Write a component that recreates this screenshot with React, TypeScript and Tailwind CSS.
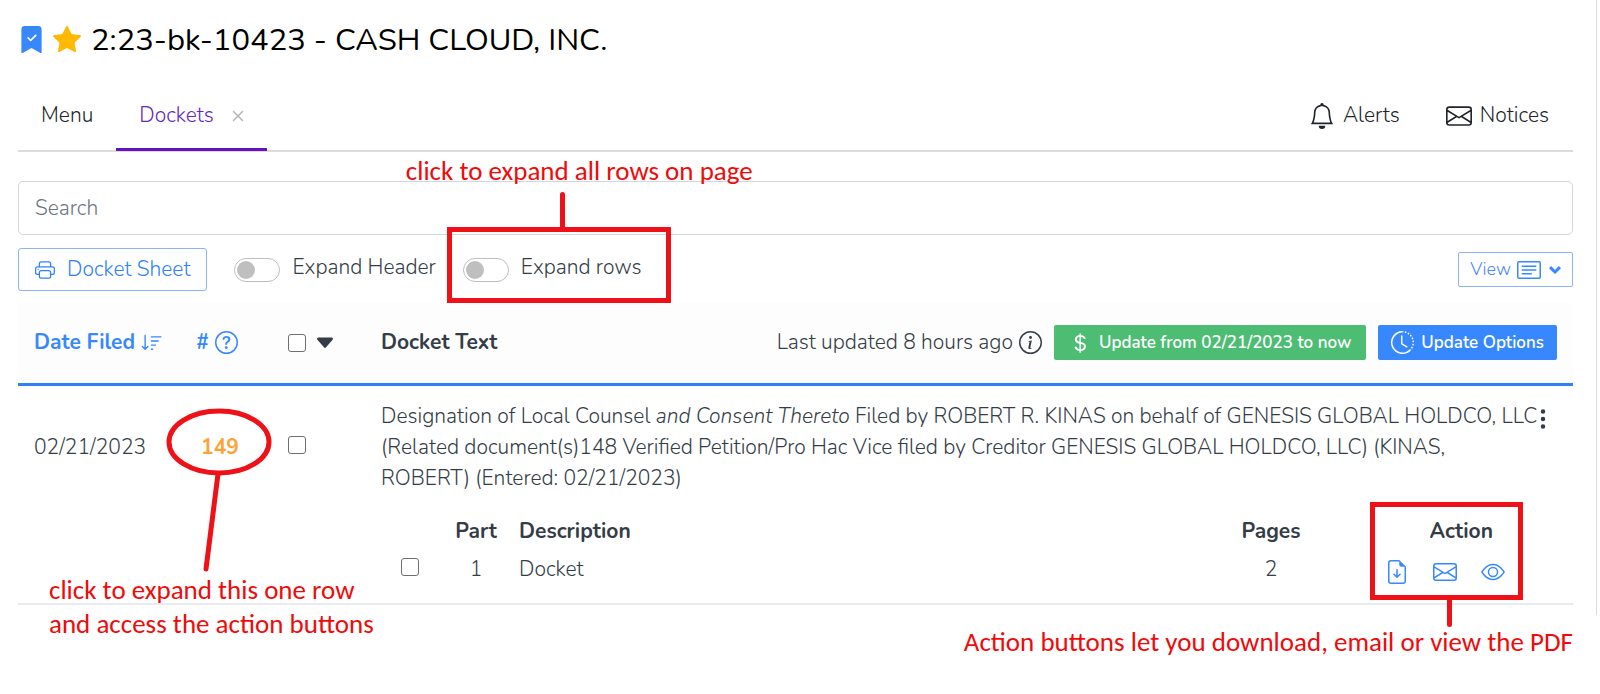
import { useState } from 'react';
import {
  BsBell,
  BsBookmarkCheckFill,
  BsCardText,
  BsCaretDownFill,
  BsClockHistory,
  BsCurrencyDollar,
  BsEnvelope,
  BsEye,
  BsFileEarmarkArrowDown,
  BsInfoCircle,
  BsPrinter,
  BsQuestionCircle,
  BsSortDown,
  BsStarFill,
  BsThreeDotsVertical,
  BsX,
} from 'react-icons/bs';

interface ToggleProps {
  id: string;
  label: string;
}

function Toggle({ id, label }: ToggleProps) {
  const [on, setOn] = useState(false);

  return (
    <div className="flex items-center gap-3">
      <input
        id={id}
        type="checkbox"
        role="switch"
        checked={on}
        onChange={() => setOn(!on)}
        className="h-6 w-[46px] appearance-none rounded-full border border-[#bfbfbf] bg-white p-0.5 before:block before:size-[18px] before:rounded-full before:bg-[#bfbfbf] checked:before:ml-auto checked:before:bg-[#3788ff]"
      />
      <label htmlFor={id} className="pb-1.5 leading-6">{label}</label>
    </div>
  );
}

function Checkbox({ label }: { label: string }) {
  return (
    <input
      type="checkbox"
      aria-label={label}
      className="block size-[18px] shrink-0 appearance-none rounded-[3px] border border-[#6f6f6f] bg-white checked:bg-[#3788ff]"
    />
  );
}

function CaseHeader() {
  return (
    <header className="flex h-10 items-center">
      <BsBookmarkCheckFill className="size-[27px] text-[#3788ff]" />
      <BsStarFill className="ml-2 size-7 text-[#ffb900]" />
      <h1 className="ml-2.5 pt-0.5 text-[31px] leading-10 font-normal text-black">2:23-bk-10423 - CASH CLOUD, INC.</h1>
    </header>
  );
}

function Tabs() {
  return (
    <nav className="mt-[19px] flex h-[74px] items-start border-b-2 border-[#dcdcdc]">
      <a href="#menu" className="flex h-[73px] items-center px-[23px] pt-0.5 text-[#212529]">Menu</a>
      <div className="flex h-[73px] items-center border-b-3 border-[#6610c0] pt-[5px] pr-[17px] pl-[23px] text-[#6528b8]">
        <a href="#dockets">Dockets</a>
        <button type="button" aria-label="Close tab" className="ml-3 text-[#b5b5b5]">
          <BsX className="size-6" />
        </button>
      </div>
      <div className="ml-auto flex h-[73px] items-center gap-[46px] pt-0.5 pr-6 text-[#212529]">
        <a href="#alerts" className="flex items-center gap-2">
          <BsBell className="size-[26px]" />
          Alerts
        </a>
        <a href="#notices" className="flex items-center gap-2">
          <BsEnvelope className="size-[26px]" />
          Notices
        </a>
      </div>
    </nav>
  );
}

function Toolbar() {
  return (
    <div className="mt-[13px] flex items-center gap-[27px]">
      <button type="button" className="flex h-[43px] items-center gap-3 rounded-[3px] border border-[#8ab4ff] px-4 text-[#3080ff]">
        <BsPrinter className="size-5" />
        Docket Sheet
      </button>
      <Toggle id="expand-header" label="Expand Header" />
      <div className="relative">
        <Toggle id="expand-rows" label="Expand rows" />
        {/* Callout for the row toggle */}
        <div className="pointer-events-none absolute -top-7 -left-4 h-[76px] w-56 border-5 border-[#ee1118]">
          <div className="absolute bottom-full left-[108px] h-10 w-[5px] rounded-full bg-[#ee1118]" />
          <p className="absolute bottom-[110px] -left-[46px] font-[Carlito,Lato,sans-serif] text-[27px] leading-[34px] font-normal whitespace-nowrap text-[#f00a0a]">
            click to expand all rows on page
          </p>
        </div>
      </div>
      <button type="button" className="ml-auto flex h-[35px] items-center rounded-xs border border-[#8ab4ff] px-[11px] text-[18px] text-[#4a86ff]">
        View
        <BsCardText className="ml-1.5 size-6 text-[#3788ff]" />
        <svg viewBox="0 0 12 8" className="ml-2 h-2 w-3 text-[#3788ff]" fill="none" stroke="currentColor" strokeWidth="3">
          <path d="M1 1.200 6 6l5-4.800" />
        </svg>
      </button>
    </div>
  );
}

function DocumentParts() {
  return (
    <div className="relative mt-[19px] mr-6">
      <table className="w-full table-fixed">
        <thead>
          <tr className="h-[38px] font-bold">
            <th className="w-[58px]" aria-label="Select" />
            <th className="w-[74px]">Part</th>
            <th className="pl-1.5 text-left">Description</th>
            <th className="w-[150px]">Pages</th>
            <th className="w-[175px] pr-7 text-right">Action</th>
          </tr>
        </thead>
        <tbody>
          <tr className="h-[38px]">
            <td className="pb-1.5 pl-5"><Checkbox label="Select part 1" /></td>
            <td className="text-center">1</td>
            <td className="pl-1.5">Docket</td>
            <td className="text-center">2</td>
            <td className="pr-4">
              <div className="flex justify-end gap-6 pt-1 text-[#3788ff]">
                <button type="button" aria-label="Download"><BsFileEarmarkArrowDown className="size-6" /></button>
                <button type="button" aria-label="Email"><BsEnvelope className="size-6" /></button>
                <button type="button" aria-label="View"><BsEye className="size-6" /></button>
              </div>
            </td>
          </tr>
        </tbody>
      </table>

      {/* Callout for the action buttons */}
      <div className="pointer-events-none absolute -top-[11px] -right-0.5 h-[98px] w-[153px] border-5 border-[#ee1118]">
        <div className="absolute top-full left-[72px] h-8 w-[5px] rounded-full bg-[#ee1118]" />
        <p className="absolute top-[118px] -right-[55px] font-[Carlito,Lato,sans-serif] text-[27px] leading-[34px] font-normal whitespace-nowrap text-[#f00a0a]">
          Action buttons let you download, email or view the PDF
        </p>
      </div>
    </div>
  );
}

function DocketTable() {
  return (
    <table className="mt-3 w-full table-fixed">
      <thead>
        <tr className="h-[81px] border-b-3 border-[#3080f8] bg-[#fdfdfd] text-left font-bold">
          <th className="w-[164px] pl-4 text-[#3788ff]">
            <button type="button" className="flex items-center gap-1.5 whitespace-nowrap">
              Date Filed
              <BsSortDown className="size-[22px]" />
            </button>
          </th>
          <th className="w-[76px] pr-1.5 text-[#3788ff]">
            <div className="flex items-center justify-center gap-1.5">
              #
              <BsQuestionCircle className="size-[23px]" />
            </div>
          </th>
          <th className="w-[107px] pl-[30px]">
            <div className="flex items-center gap-2">
              <Checkbox label="Select all dockets" />
              <BsCaretDownFill className="size-[22px]" />
            </div>
          </th>
          <th className="pr-4 pl-4">
            <div className="flex items-center">
              Docket Text
              <span className="ml-auto font-light">Last updated 8 hours ago</span>
              <BsInfoCircle className="ml-1.5 size-[23px]" />
              <button type="button" className="ml-3 flex h-[35px] items-center gap-2 rounded-xs bg-[#4dbd74] px-[15px] text-[17px] font-semibold text-white">
                <BsCurrencyDollar className="size-[22px]" />
                Update from 02/21/2023 to now
              </button>
              <button type="button" className="ml-3 flex h-[35px] items-center gap-[7px] rounded-xs bg-[#3788ff] px-[13px] text-[17px] font-semibold text-white">
                <BsClockHistory className="size-[23px]" />
                Update Options
              </button>
            </div>
          </th>
        </tr>
      </thead>
      <tbody>
        <tr className="border-b-2 border-[#e9ecef] align-top">
          <td className="relative pt-[46px] pl-4">
            02/21/2023
            <p className="pointer-events-none absolute top-[187px] left-[31px] z-10 font-[Carlito,Lato,sans-serif] text-[27px] leading-[34px] font-normal whitespace-nowrap text-[#f00a0a]">
              click to expand this one row
              <br />
              and access the action buttons
            </p>
          </td>
          <td className="relative pt-[46px] text-center font-bold text-[#ffa235]">
            <button type="button">149</button>
            {/* Callout for the docket number */}
            <svg
              viewBox="0 0 106 166"
              className="pointer-events-none absolute top-[22px] -left-4 h-[166px] w-[106px] max-w-none"
              fill="none"
              stroke="#ee1118"
              strokeWidth="5"
              strokeLinecap="round"
            >
              <ellipse cx="53" cy="34" rx="50" ry="31" />
              <path d="M52 66 40 161" />
            </svg>
          </td>
          <td className="pt-[50px] pl-[30px]"><Checkbox label="Select docket 149" /></td>
          <td className="pt-[15px] pr-7 pb-3.5 pl-4">
            <div className="flex items-start">
              <p className="flex-1 leading-[31px]">
                Designation of Local Counsel <i>and Consent Thereto</i> Filed by ROBERT R. KINAS on behalf of GENESIS
                GLOBAL HOLDCO, LLC (Related document(s)148 Verified Petition/Pro Hac Vice filed by Creditor GENESIS
                GLOBAL HOLDCO, LLC) (KINAS,
                <br />
                ROBERT) (Entered: 02/21/2023)
              </p>
              <button type="button" aria-label="More" className="flex w-1 justify-center pt-1.5">
                <BsThreeDotsVertical className="size-6 shrink-0" />
              </button>
            </div>
            <DocumentParts />
          </td>
        </tr>
      </tbody>
    </table>
  );
}

export default function App() {
  return (
    <div className="min-h-screen bg-white font-[Nunito,'Open_Sans',sans-serif] text-[21px] leading-[31px] font-light text-[#343d46]">
      <main className="mr-[3px] border-r border-[#dcdcdc] pt-[19px] pr-[23px] pb-2.5 pl-[18px]">
        <CaseHeader />
        <Tabs />
        <input
          type="search"
          aria-label="Search"
          placeholder="Search"
          className="mt-[29px] block h-[54px] w-full rounded-[5px] border border-[#d3d6de] px-4 placeholder:text-[#6c757d]"
        />
        <Toolbar />
        <DocketTable />
      </main>
    </div>
  );
}
